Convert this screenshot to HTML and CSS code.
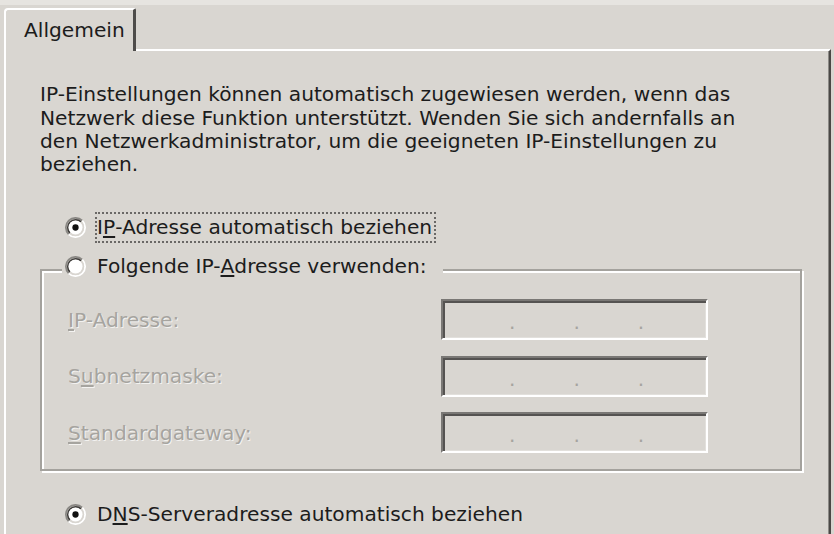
FILE: index.html
```html
<!DOCTYPE html>
<html lang="de">
<head>
<meta charset="utf-8">
<title>Allgemein</title>
<link rel="stylesheet" href="styles.css">
</head>
<body>
<div class="dialog">
  <div class="tabrow">
    <div class="tab">Allgemein</div>
  </div>
  <div class="panel">
    <p class="intro">IP-Einstellungen können automatisch zugewiesen werden, wenn das<br>Netzwerk diese Funktion unterstützt. Wenden Sie sich andernfalls an<br>den Netzwerkadministrator, um die geeigneten IP-Einstellungen zu<br>beziehen.</p>

    <div class="radio-row first">
      <svg class="radio" viewBox="0 0 12 12" width="21" height="21">
        <path d="M2.11 9.89A5.5 5.5 0 0 1 9.89 2.11" fill="none" stroke="#8a8884" stroke-width="1"/>
        <path d="M9.89 2.11A5.5 5.5 0 0 1 2.11 9.89" fill="none" stroke="#ffffff" stroke-width="1"/>
        <path d="M2.82 9.18A4.5 4.5 0 0 1 9.18 2.82" fill="none" stroke="#3e3c3a" stroke-width="1"/>
        <path d="M9.18 2.82A4.5 4.5 0 0 1 2.82 9.18" fill="none" stroke="#d9d6d1" stroke-width="1"/>
        <circle cx="6" cy="6" r="4" fill="#ffffff"/>
        <circle cx="6" cy="6" r="1.8" fill="#111111"/>
      </svg>
      <span class="lbl focus">I<u>P</u>-Adresse automatisch beziehen</span>
    </div>

    <fieldset class="group">
      <legend class="legend">
        <div class="radio-row in-legend">
          <svg class="radio" viewBox="0 0 12 12" width="21" height="21">
            <path d="M2.11 9.89A5.5 5.5 0 0 1 9.89 2.11" fill="none" stroke="#8a8884" stroke-width="1"/>
            <path d="M9.89 2.11A5.5 5.5 0 0 1 2.11 9.89" fill="none" stroke="#ffffff" stroke-width="1"/>
            <path d="M2.82 9.18A4.5 4.5 0 0 1 9.18 2.82" fill="none" stroke="#3e3c3a" stroke-width="1"/>
            <path d="M9.18 2.82A4.5 4.5 0 0 1 2.82 9.18" fill="none" stroke="#d9d6d1" stroke-width="1"/>
            <circle cx="6" cy="6" r="4" fill="#ffffff"/>
          </svg>
          <span class="lbl">Folgende IP-<u>A</u>dresse verwenden:</span>
        </div>
      </legend>

      <div class="field">
        <span class="flabel"><u>I</u>P-Adresse:</span>
        <div class="ipbox"><span class="dot">.</span><span class="dot">.</span><span class="dot">.</span></div>
      </div>
      <div class="field">
        <span class="flabel">S<u>u</u>bnetzmaske:</span>
        <div class="ipbox"><span class="dot">.</span><span class="dot">.</span><span class="dot">.</span></div>
      </div>
      <div class="field">
        <span class="flabel"><u>S</u>tandardgateway:</span>
        <div class="ipbox"><span class="dot">.</span><span class="dot">.</span><span class="dot">.</span></div>
      </div>
    </fieldset>

    <div class="radio-row dns">
      <svg class="radio" viewBox="0 0 12 12" width="21" height="21">
        <path d="M2.11 9.89A5.5 5.5 0 0 1 9.89 2.11" fill="none" stroke="#8a8884" stroke-width="1"/>
        <path d="M9.89 2.11A5.5 5.5 0 0 1 2.11 9.89" fill="none" stroke="#ffffff" stroke-width="1"/>
        <path d="M2.82 9.18A4.5 4.5 0 0 1 9.18 2.82" fill="none" stroke="#3e3c3a" stroke-width="1"/>
        <path d="M9.18 2.82A4.5 4.5 0 0 1 2.82 9.18" fill="none" stroke="#d9d6d1" stroke-width="1"/>
        <circle cx="6" cy="6" r="4" fill="#ffffff"/>
        <circle cx="6" cy="6" r="1.8" fill="#111111"/>
      </svg>
      <span class="lbl">D<u>N</u>S-Serveradresse automatisch beziehen</span>
    </div>
  </div>
</div>
</body>
</html>
```
FILE: styles.css
```css
html, body {
  margin: 0;
  padding: 0;
}

body {
  background: #d9d6d1;
  font-family: "DejaVu Sans", "Liberation Sans", sans-serif;
  font-size: 20.2px;
  color: #1c1c1c;
}

.dialog {
  height: 534px;
  box-sizing: border-box;
  padding-top: 8px;
  display: flex;
  flex-direction: column;
  overflow: hidden;
  background: linear-gradient(#e6e4e0 0, #e6e4e0 5px, #d9d6d1 5px);
}

.tabrow {
  display: flex;
  height: 41px;
  margin: 0 3px 0 4px;
  position: relative;
  z-index: 1;
}

.tab {
  width: 132px;
  height: 43px;
  box-sizing: border-box;
  border-left: 2px solid #ffffff;
  border-top: 2px solid #ffffff;
  border-right: 3px solid #4e4c4a;
  border-top-left-radius: 4px;
  border-top-right-radius: 2px;
  background: #d9d6d1;
  padding-left: 18px;
  line-height: 40px;
  white-space: nowrap;
}

.panel {
  flex: 1;
  margin: 0 3px 0 4px;
  border-left: 2px solid #ffffff;
  border-top: 2px solid #ffffff;
  border-right: 2px solid #4a4846;
  box-shadow: inset -1px 0 0 #8d8b87;
  padding: 32.4px 0 0 34px;
}

.intro {
  margin: 0;
  line-height: 23.3px;
  white-space: nowrap;
}

.radio-row {
  display: flex;
  align-items: center;
  gap: 9px;
  height: 31px;
  margin-left: 25px;
}

.radio {
  flex: none;
  display: block;
}

.lbl {
  box-sizing: border-box;
  height: 31px;
  display: flex;
  align-items: center;
  border: 2px solid transparent;
  padding-right: 2px;
  white-space: nowrap;
}

.focus {
  border: 2px dotted #6a6866;
}

.first {
  margin-top: 35px;
}

.group {
  margin: 8px 0 0 0;
  width: 762px;
  min-width: 0;
  box-sizing: border-box;
  border: 2px solid #a4a29d;
  box-shadow: 2px 2px 0 #ffffff, inset 2px 2px 0 #ffffff;
  padding: 9.5px 0 16px 20px;
}

.legend {
  padding: 0 12px 8px 3px;
  background: #d9d6d1;
}

.in-legend {
  margin-left: 0;
}

.field {
  display: flex;
  align-items: center;
  height: 41px;
  padding-left: 6px;
}

.field + .field {
  margin-top: 15.5px;
}

.flabel {
  width: 373px;
  flex: none;
  color: #a6a49f;
  text-shadow: 1px 1px 0 rgba(255, 255, 255, 0.7);
  white-space: nowrap;
}

.ipbox {
  width: 267px;
  height: 41px;
  box-sizing: border-box;
  border: 2px solid;
  border-color: #7a7875 #ffffff #ffffff #7a7875;
  box-shadow: inset 2px 2px 0 #555351, inset -1px -1px 0 #e2e0dc;
  display: flex;
  align-items: center;
  gap: 58px;
  padding: 6px 0 0 66px;
  color: #a6a49f;
  line-height: 1;
}

.dot {
  display: block;
}

.dns {
  margin-top: 27.5px;
}
```
